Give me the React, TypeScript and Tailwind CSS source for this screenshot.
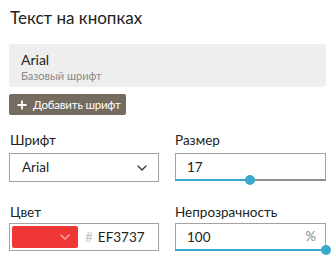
import React from "react";

const Chevron = ({ color = "#333" }: { color?: string }) => (
  <svg width="10" height="6" viewBox="0 0 10 6" fill="none">
    <path d="M1 1l4 4 4-4" stroke={color} strokeWidth="1.3" strokeLinecap="round" strokeLinejoin="round" />
  </svg>
);

const Slider = ({ pct }: { pct: number }) => (
  <div className="absolute left-[-1px] right-[-1px] bottom-[-1px] h-[2px] bg-[#8f8f8f]">
    <div className="absolute left-0 top-0 h-[2px] bg-[#3aa9cc]" style={{ width: `${pct}%` }} />
    <div
      className="absolute top-[-4px] w-[10px] h-[10px] rounded-full bg-[#3aa9cc] -ml-[5px]"
      style={{ left: `${pct}%` }}
    />
  </div>
);

export default function App() {
  return (
    <div className="w-[335px] h-[266px] bg-white px-[9px] text-[#222]" style={{ fontFamily: "Lato, 'Noto Sans', sans-serif" }}>
      <div className="pt-[6px] h-[30px] pl-[1px] text-[17px] leading-[24px] text-[#222]">Текст на кнопках</div>
      <div className="mt-[14px] h-[43px] rounded-[3px] bg-[#eeeeee] px-[12px] pt-[7px]">
        <div className="text-[14px] leading-[17px] text-[#222]">Arial</div>
        <div className="text-[11px] leading-[14px] text-[#8a8a8a] mt-[1px]">Базовый шрифт</div>
      </div>
      <div className="mt-[7px] flex h-[21px] w-[117px] items-center gap-[6px] whitespace-nowrap rounded-[2px] bg-[#766b5f] pl-[8px] text-[11.5px] tracking-[-0.2px] text-white">
        <svg width="10" height="10" viewBox="0 0 10 10" className="shrink-0">
          <path d="M5 0.5v9M0.5 5h9" stroke="#fff" strokeWidth="1.8" />
        </svg>
        <span>Добавить шрифт</span>
      </div>
      <div className="mt-[15px] grid grid-cols-[150px_151px] gap-x-[16px] text-[13.5px]">
        <div>
          <div className="h-[20px] pl-[1px] leading-[20px] text-[#222]">Шрифт</div>
          <div className="mt-[3px] flex h-[29px] items-center justify-between border border-[#a3a3a3] pl-[12px] pr-[11px] text-[#222]">
            <span>Arial</span>
            <Chevron />
          </div>
        </div>
        <div>
          <div className="h-[20px] leading-[20px] text-[#222]">Размер</div>
          <div className="relative mt-[3px] flex h-[28px] items-center border border-[#a3a3a3] pl-[11px] text-[#222]">
            <span>17</span>
            <Slider pct={49.5} />
          </div>
        </div>
        <div className="mt-[20px]">
          <div className="h-[20px] pl-[1px] leading-[20px] text-[#222]">Цвет</div>
          <div className="mt-[1px] flex h-[28px] items-center border border-[#a3a3a3] p-[2px]">
            <div className="flex h-full w-[66px] items-center justify-end rounded-[2px] bg-[#ef3737] pr-[8px]">
              <Chevron color="#f3b0b0" />
            </div>
            <span className="ml-[7px] text-[#c4c4c4]">#</span>
            <span className="ml-[5px] text-[#222]">EF3737</span>
          </div>
        </div>
        <div className="mt-[20px]">
          <div className="h-[20px] leading-[20px] text-[#222]">Непрозрачность</div>
          <div className="relative mt-[1px] flex h-[28px] items-center justify-between border border-[#a3a3a3] pl-[11px] pr-[9px] text-[#222]">
            <span>100</span>
            <span className="text-[13px] text-[#888]">%</span>
            <Slider pct={100} />
          </div>
        </div>
      </div>
    </div>
  );
}
